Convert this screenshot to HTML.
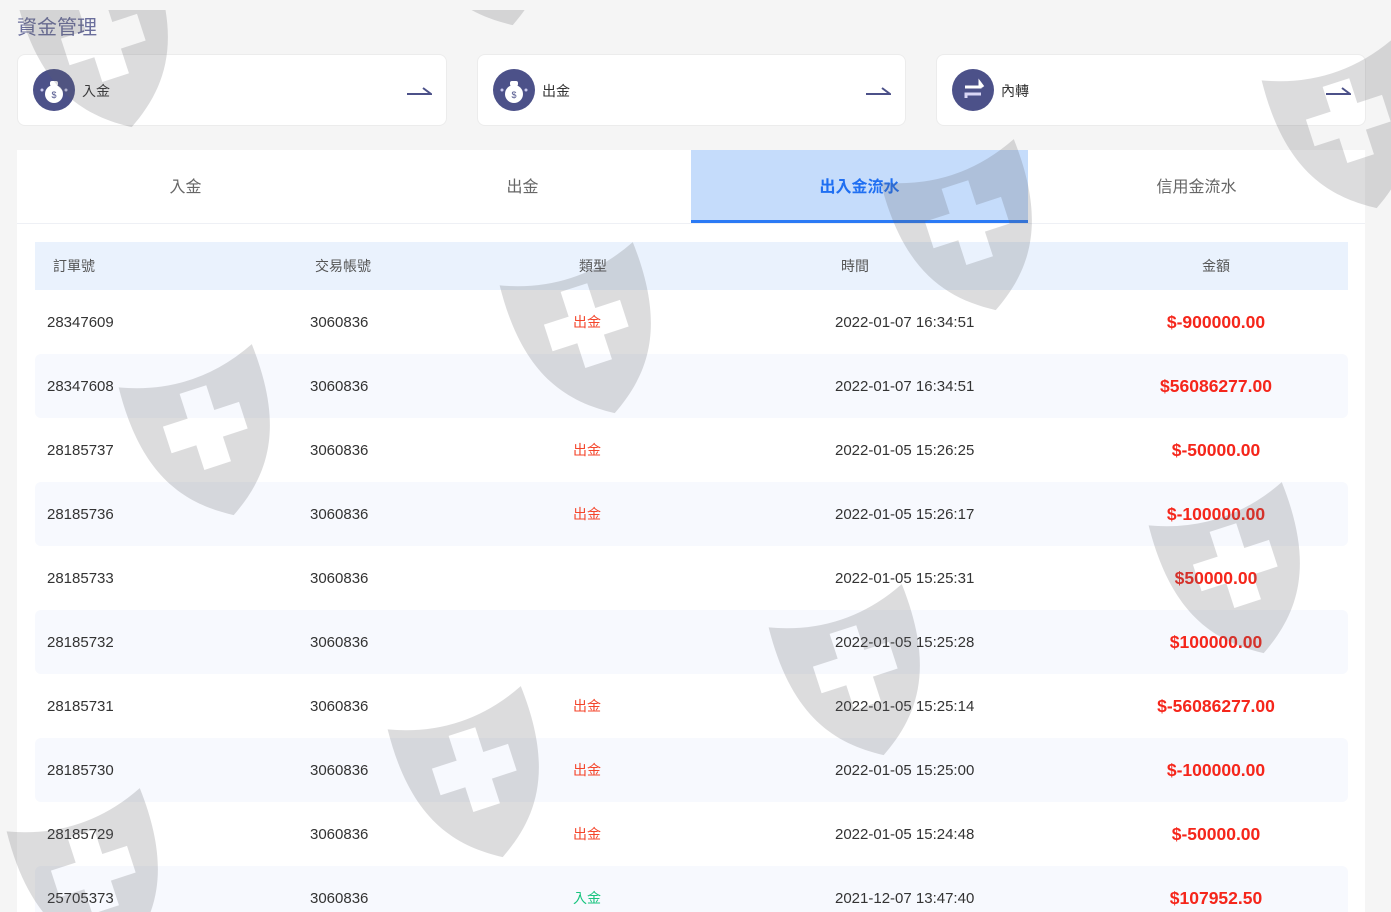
<!DOCTYPE html>
<html><head><meta charset="utf-8"><style>
*{box-sizing:border-box;margin:0;padding:0}
html,body{width:1391px;height:912px;overflow:hidden}
body{background:#f5f5f5;font-family:"Liberation Sans","Noto Sans CJK TC",sans-serif;position:relative}
.title{position:absolute;left:17px;top:11px;font-size:20px;color:#6a6e9c}
.card{position:absolute;top:54px;height:72px;background:#fff;border:1px solid #ececec;border-radius:8px}
.ic{position:absolute;left:15px;top:14px;width:42px;height:42px;border-radius:50%;background:#4c5189}
.card .lb{position:absolute;left:64px;top:26px;font-size:14px;color:#333}
.card svg.ar{position:absolute;right:14px;top:29px}
.panel{position:absolute;left:17px;top:150px;width:1348px;height:762px;background:#fff;overflow:hidden}
.tabs{display:flex;height:74px;border-bottom:1px solid #eef0f5}
.tab{flex:1;text-align:center;line-height:75px;font-size:16px;color:#666}
.tab.act{background:#c5dcfb;color:#1f6ff2;font-weight:bold;border-bottom:3px solid #2b7af5}
.tbl{position:absolute;left:18px;top:92px;width:1313px}
.row{position:relative;height:64px;font-size:15px;color:#333;border-radius:6px}
.row.h{height:48px;background:#eaf2fd;border-radius:0;color:#555;font-size:14px}
.row.s{background:#f7f9fe}
.row span{position:absolute;top:0;line-height:65px}
.row.h span{line-height:48px}
.c1{left:12px}.c2{left:275px}.c3{left:527px;width:50px;text-align:center;font-size:14px}.c4{left:800px}.c5{left:1081px;width:200px;text-align:center}
.row.h .c1{left:18px}.row.h .c2{left:280px}.row.h .c4{left:806px}
.out{color:#f4452b}.in{color:#17c47e}
.amt{color:#f5261b;font-weight:bold;font-size:17.5px}
.row span.amt{line-height:64px}
.wm{position:absolute;left:0;top:10px;pointer-events:none}
</style></head><body>
<div class="title">資金管理</div>
<div class="card" style="left:17px;width:430px"><div class="ic"><svg width="42" height="42"><circle cx="21" cy="25" r="9" fill="#fff"/><rect x="17" y="12" width="8" height="5" rx="2" fill="#fff"/><text x="21" y="29" font-size="9" text-anchor="middle" fill="#4c5189" font-family="Liberation Sans">$</text><circle cx="9" cy="21" r="1.5" fill="#c9c9ef"/><circle cx="33" cy="21" r="1.5" fill="#c9c9ef"/></svg></div><span class="lb">入金</span><svg class="ar" width="26" height="12"><path d="M1 10H25L17 4" stroke="#4c5189" stroke-width="2" fill="none"/></svg></div>
<div class="card" style="left:477px;width:429px"><div class="ic"><svg width="42" height="42"><circle cx="21" cy="25" r="9" fill="#fff"/><rect x="17" y="12" width="8" height="5" rx="2" fill="#fff"/><text x="21" y="29" font-size="9" text-anchor="middle" fill="#4c5189" font-family="Liberation Sans">$</text><circle cx="9" cy="21" r="1.5" fill="#c9c9ef"/><circle cx="33" cy="21" r="1.5" fill="#c9c9ef"/></svg></div><span class="lb">出金</span><svg class="ar" width="26" height="12"><path d="M1 10H25L17 4" stroke="#4c5189" stroke-width="2" fill="none"/></svg></div>
<div class="card" style="left:936px;width:430px"><div class="ic"><svg width="42" height="42"><path d="M13 18H28V14L31 18" stroke="#fff" stroke-width="3" fill="none"/><path d="M29 25H14V29" stroke="#d9d6f5" stroke-width="3" fill="none"/></svg></div><span class="lb">內轉</span><svg class="ar" width="26" height="12"><path d="M1 10H25L17 4" stroke="#4c5189" stroke-width="2" fill="none"/></svg></div>
<div class="panel">
<div class="tabs"><div class="tab">入金</div><div class="tab">出金</div><div class="tab act">出入金流水</div><div class="tab">信用金流水</div></div>
<div class="tbl">
<div class="row h"><span class="c1">訂單號</span><span class="c2">交易帳號</span><span class="c3" style="left:533px">類型</span><span class="c4">時間</span><span class="c5">金額</span></div>
<div class="row"><span class="c1">28347609</span><span class="c2">3060836</span><span class="c3 out">出金</span><span class="c4">2022-01-07 16:34:51</span><span class="c5 amt">$-900000.00</span></div>
<div class="row s"><span class="c1">28347608</span><span class="c2">3060836</span><span class="c3"></span><span class="c4">2022-01-07 16:34:51</span><span class="c5 amt">$56086277.00</span></div>
<div class="row"><span class="c1">28185737</span><span class="c2">3060836</span><span class="c3 out">出金</span><span class="c4">2022-01-05 15:26:25</span><span class="c5 amt">$-50000.00</span></div>
<div class="row s"><span class="c1">28185736</span><span class="c2">3060836</span><span class="c3 out">出金</span><span class="c4">2022-01-05 15:26:17</span><span class="c5 amt">$-100000.00</span></div>
<div class="row"><span class="c1">28185733</span><span class="c2">3060836</span><span class="c3"></span><span class="c4">2022-01-05 15:25:31</span><span class="c5 amt">$50000.00</span></div>
<div class="row s"><span class="c1">28185732</span><span class="c2">3060836</span><span class="c3"></span><span class="c4">2022-01-05 15:25:28</span><span class="c5 amt">$100000.00</span></div>
<div class="row"><span class="c1">28185731</span><span class="c2">3060836</span><span class="c3 out">出金</span><span class="c4">2022-01-05 15:25:14</span><span class="c5 amt">$-56086277.00</span></div>
<div class="row s"><span class="c1">28185730</span><span class="c2">3060836</span><span class="c3 out">出金</span><span class="c4">2022-01-05 15:25:00</span><span class="c5 amt">$-100000.00</span></div>
<div class="row"><span class="c1">28185729</span><span class="c2">3060836</span><span class="c3 out">出金</span><span class="c4">2022-01-05 15:24:48</span><span class="c5 amt">$-50000.00</span></div>
<div class="row s"><span class="c1">25705373</span><span class="c2">3060836</span><span class="c3 in">入金</span><span class="c4">2021-12-07 13:47:40</span><span class="c5 amt">$107952.50</span></div>
</div></div>
<svg class="wm" width="1391" height="902" viewBox="0 10 1391 902">
<defs><path id="sh" fill-rule="evenodd" fill="rgba(95,95,100,0.22)" d="M0,5 Q70,35 140,5 C146,95 115,135 70,162 C25,135 -6,95 0,5Z M56,30 H84 V56 H110 V84 H84 V110 H56 V84 H30 V56 H56Z"/></defs>
<g transform="translate(10,3)">
<use href="#sh" transform="translate(97,48) rotate(-18) translate(-70,-82)"/>
<use href="#sh" transform="translate(478,-54) rotate(-18) translate(-70,-82)"/>
<use href="#sh" transform="translate(1342,129) rotate(-18) translate(-70,-82)"/>
<use href="#sh" transform="translate(961,231) rotate(-18) translate(-70,-82)"/>
<use href="#sh" transform="translate(580,334) rotate(-18) translate(-70,-82)"/>
<use href="#sh" transform="translate(199,436) rotate(-18) translate(-70,-82)"/>
<use href="#sh" transform="translate(1229,574) rotate(-18) translate(-70,-82)"/>
<use href="#sh" transform="translate(849,676) rotate(-18) translate(-70,-82)"/>
<use href="#sh" transform="translate(468,778) rotate(-18) translate(-70,-82)"/>
<use href="#sh" transform="translate(87,880) rotate(-18) translate(-70,-82)"/>
</g>
</svg>
</body></html>
